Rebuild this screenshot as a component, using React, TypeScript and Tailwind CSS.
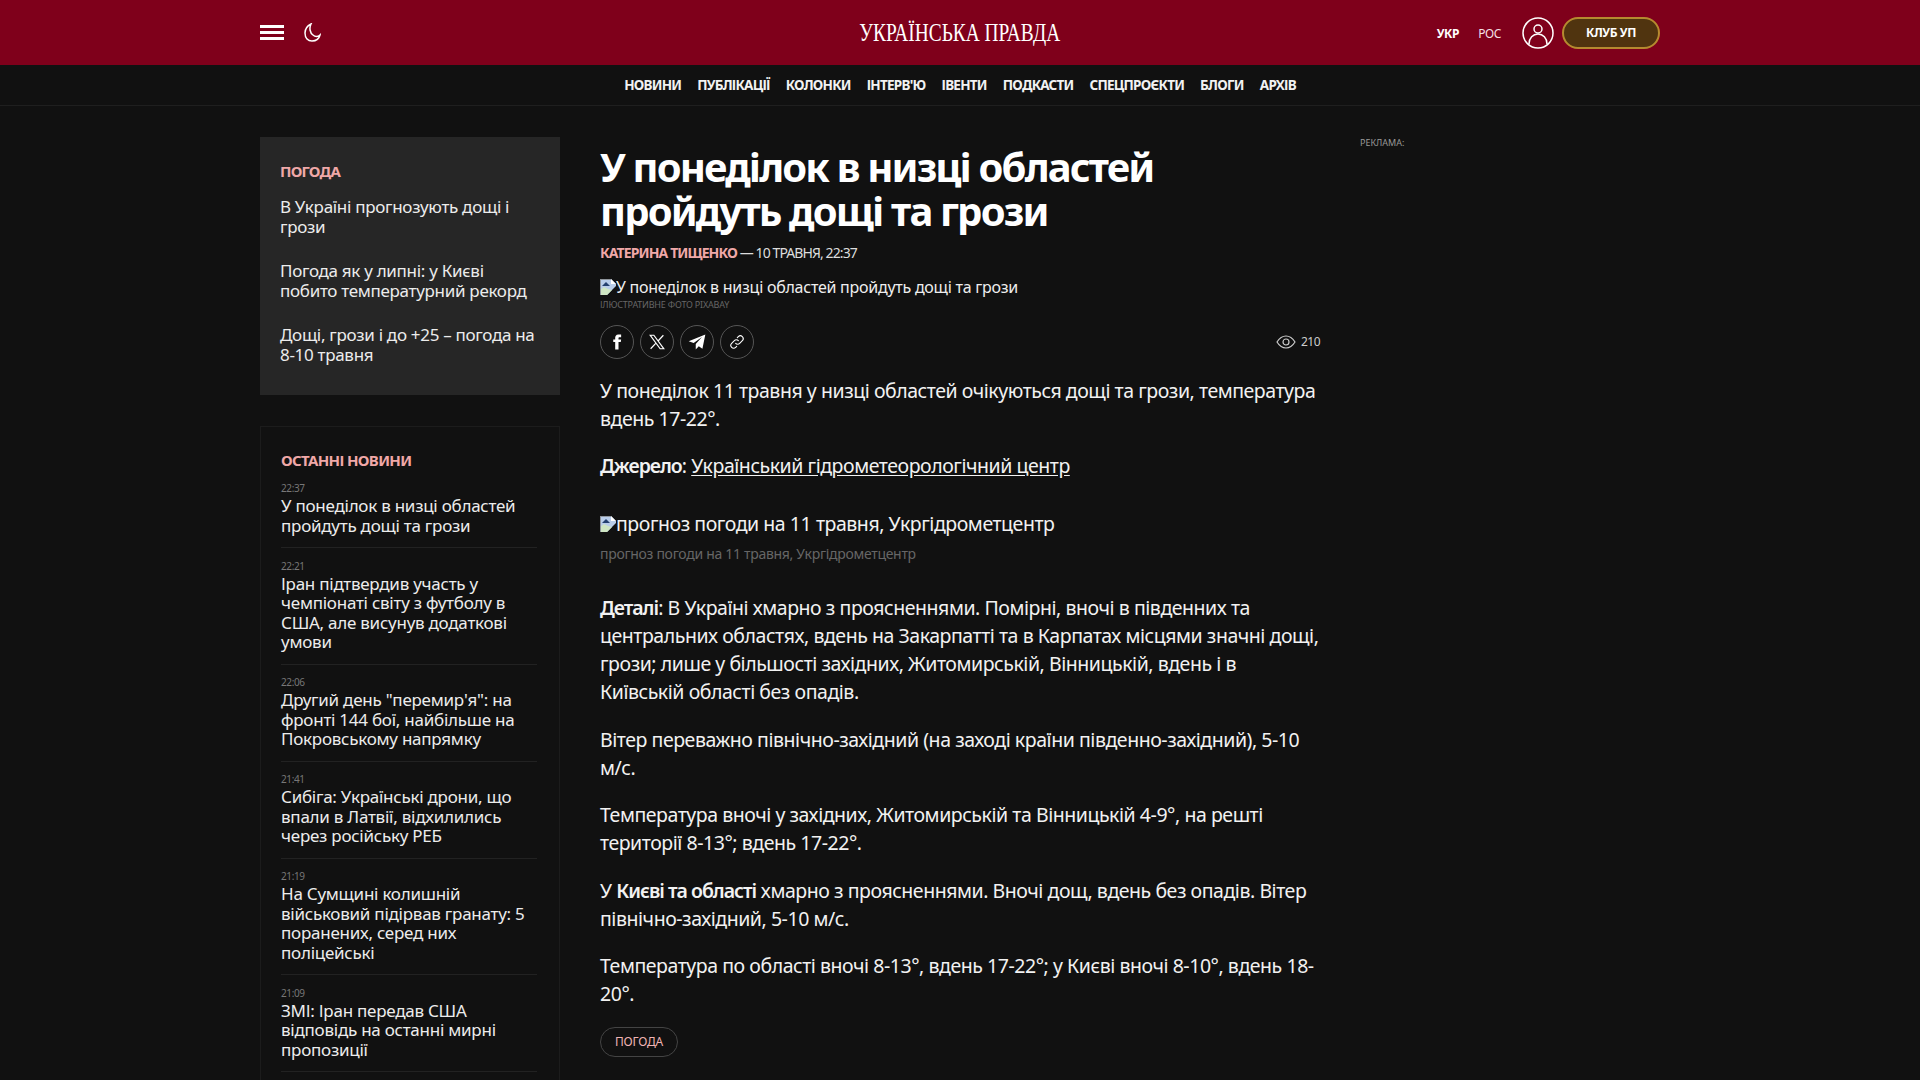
import React from 'react';

const sans = "font-['Noto_Sans','Open_Sans',sans-serif]";

const navItems = ['НОВИНИ', 'ПУБЛІКАЦІЇ', 'КОЛОНКИ', "ІНТЕРВ'Ю", 'ІВЕНТИ', 'ПОДКАСТИ', 'СПЕЦПРОЄКТИ', 'БЛОГИ', 'АРХІВ'];

const news = [
  { time: '22:37', title: 'У понеділок в низці областей пройдуть дощі та грози' },
  { time: '22:21', title: 'Іран підтвердив участь у чемпіонаті світу з футболу в США, але висунув додаткові умови' },
  { time: '22:06', title: 'Другий день "перемир\'я": на фронті 144 бої, найбільше на Покровському напрямку' },
  { time: '21:41', title: 'Сибіга: Українські дрони, що впали в Латвії, відхилились через російську РЕБ' },
  { time: '21:19', title: 'На Сумщині колишній військовий підірвав гранату: 5 поранених, серед них поліцейські' },
  { time: '21:09', title: 'ЗМІ: Іран передав США відповідь на останні мирні пропозиції' },
];

function BrokenImage() {
  return (
    <svg width="16" height="16" viewBox="0 0 16 16" className="shrink-0">
      <path d="M0 0H11L16 5V7L7 16H0Z" fill="#b9cdea" />
      <path d="M11 0V5H16Z" fill="#ffffff" />
      <path d="M0 11L4 8L8 10L12 11L7 16H0Z" fill="#cfe6c4" />
      <path d="M2 7L6 3L10 7Z" fill="#24406f" />
      <path d="M0 0H11V1H1V16H0Z" fill="#8f959c" />
    </svg>
  );
}

function ShareButton({ children }: { children: React.ReactNode }) {
  return (
    <div className="w-[34px] h-[34px] rounded-full border border-[#555] flex items-center justify-center text-white">
      {children}
    </div>
  );
}

export default function App() {
  return (
    <div className={`bg-[#111111] text-white overflow-hidden h-[1080px] ${sans}`}>
      {/* Header */}
      <header className="h-[65px] bg-[#7f001b]">
        <div className="relative w-[1400px] mx-auto h-full flex items-center">
          <div className="flex flex-col gap-[3px] w-[24px]">
            <span className="h-[3px] bg-white" />
            <span className="h-[3px] bg-white" />
            <span className="h-[3px] bg-white" />
          </div>
          <svg width="18" height="20" viewBox="0 0 18 20" fill="none" stroke="white" strokeWidth="1.5" className="ml-[19px]">
            <path d="M8 1C4 3 2 6 2 10c0 5 3 8 7 8 4 0 7-2 8-6-2 2-5 2-7 0C7 10 6 5 8 1Z" />
          </svg>
          <div className="absolute left-0 right-0 text-center pointer-events-none">
            <span className="inline-block font-['Liberation_Serif',serif] text-[26px] leading-[30px] scale-x-[0.745] whitespace-nowrap">
              УКРАЇНСЬКА ПРАВДА
            </span>
          </div>
          <div className="ml-auto flex items-center">
            <span className="text-[12px] font-bold tracking-[-0.4px] mt-[2px]">УКР</span>
            <span className="text-[12px] ml-[19px] tracking-[-0.4px] text-[#f3dfe3] mt-[2px]">РОС</span>
            <svg width="32" height="32" viewBox="0 0 32 32" fill="none" stroke="white" strokeWidth="1.5" className="ml-[21px]">
              <circle cx="16" cy="16" r="15" />
              <circle cx="16" cy="12" r="4" />
              <path d="M7 27c0-6 4-10 9-10s9 4 9 10" />
            </svg>
            <div className="ml-[8px] w-[98px] h-[32px] rounded-full bg-[#50340f] border-2 border-[#b58a2f] flex items-center justify-center text-[12px] font-bold tracking-[-0.4px]">
              КЛУБ УП
            </div>
          </div>
        </div>
      </header>

      {/* Sections nav */}
      <nav className="h-[41px] pt-[1px] border-b border-[#1f1f1f] flex items-center justify-center gap-[16px] text-[13.5px] font-bold tracking-[-0.75px] text-[#f2f2f2]">
        {navItems.map((item) => (
          <span key={item}>{item}</span>
        ))}
      </nav>

      <div className="w-[1400px] mx-auto flex pt-[31px]">
        {/* Left column */}
        <aside className="w-[300px] shrink-0">
          <section className="bg-[#262626] h-[258px] pt-[24px] px-[20px]">
            <h3 className="text-[15px] leading-[20px] font-bold text-[#f0a8a8] tracking-[-0.8px]">ПОГОДА</h3>
            <div className="mt-[6px] flex flex-col gap-[24px] text-[17px] leading-[20px] tracking-[-0.3px] text-[#ececec]">
              <p className="mt-[10px]">В Україні прогнозують дощі і грози</p>
              <p>Погода як у липні: у Києві побито температурний рекорд</p>
              <p>Дощі, грози і до +25 – погода на 8-10 травня</p>
            </div>
          </section>
          <section className="mt-[31px] border border-[#1c1c1c] pl-[20px] pr-[22px] pt-[23px]">
            <h3 className="text-[15px] leading-[20px] font-bold text-[#f0a8a8] tracking-[-0.65px]">ОСТАННІ НОВИНИ</h3>
            <div className="mt-[11px]">
              {news.map((n) => (
                <div key={n.time} className="border-b border-[#222] pb-[12px] mb-[10.5px]">
                  <div className="text-[10px] leading-[14px] text-[#777] tracking-[-0.4px]">{n.time}</div>
                  <div className="mt-[1px] text-[17px] leading-[19.5px] tracking-[-0.25px] text-[#ececec]">{n.title}</div>
                </div>
              ))}
            </div>
          </section>
        </aside>

        {/* Article */}
        <main className="ml-[40px] w-[720px] shrink-0">
          <h1 className="pt-[8px] text-[40px] leading-[44px] font-bold tracking-[-1.85px] pr-[100px]">
            У понеділок в низці областей пройдуть дощі та грози
          </h1>
          <div className="mt-[10px] text-[14px] leading-[20px] tracking-[-0.9px] text-[#dddddd]">
            <span className="font-bold text-[#f0a8a8]">КАТЕРИНА ТИЩЕНКО</span> — 10 ТРАВНЯ, 22:37
          </div>
          <div className="mt-[13px] flex items-center text-[16px] leading-[22px] tracking-[-0.25px] text-[#eeeeee]">
            <BrokenImage />
            <span>У понеділок в низці областей пройдуть дощі та грози</span>
          </div>
          <div className="text-[9px] leading-[12px] mt-[1px] text-[#666] tracking-[-0.2px]">ІЛЮСТРАТИВНЕ ФОТО PIXABAY</div>
          <div className="mt-[14px] flex items-center gap-[6px]">
            <ShareButton>
              <svg width="18" height="18" viewBox="0 0 24 24" fill="white"><path d="M14 8.5V6.6c0-.9.6-1.1 1-1.1h2.5V2H14c-3.6 0-4.4 2.6-4.4 4.4v2.1H7V12h2.6v10H14V12h3l.5-3.5H14Z" /></svg>
            </ShareButton>
            <ShareButton>
              <svg width="18" height="18" viewBox="0 0 24 24" fill="none" stroke="white" strokeWidth="1.6"><path d="M3 3h4.8L21 21h-4.8ZM20.5 3l-7.4 8M10.6 13.600 3.500 21" /></svg>
            </ShareButton>
            <ShareButton>
              <svg width="20" height="20" viewBox="0 0 24 24" fill="white"><path d="M22 3 2 11l6 2.2L18 6l-7.5 8.5V21l3.6-4 4.4 3.2Z" /></svg>
            </ShareButton>
            <ShareButton>
              <svg width="16" height="16" viewBox="0 0 24 24" fill="none" stroke="white" strokeWidth="1.6" strokeLinecap="round"><path d="M10 14a4 4 0 0 0 6 0l4-4a4 4 0 0 0-6-6l-1.500 1.500" /><path d="M14 10a4 4 0 0 0-6 0l-4 4a4 4 0 0 0 6 6l1.500-1.500" /></svg>
            </ShareButton>
            <div className="ml-auto flex items-center gap-[5px] text-[12px] tracking-[-0.5px] text-[#cccccc]">
              <svg width="20" height="16" viewBox="0 0 20 16" fill="none" stroke="#cccccc" strokeWidth="1.2"><path d="M1 8c2.500-4 5.500-6 9-6s6.500 2 9 6c-2.500 4-5.500 6-9 6s-6.500-2-9-6Z" /><circle cx="10" cy="8" r="3" /></svg>
              210
            </div>
          </div>

          <div className="mt-[18px] text-[19.5px] leading-[28px] tracking-[-0.45px] text-[#f2f2f2]">
            <p>У понеділок 11 травня у низці областей очікуються дощі та грози, температура вдень 17-22°.</p>
            <p className="mt-[19px]">
              <b className="font-semibold tracking-[-1px]">Джерело</b>: <a className="underline underline-offset-2">Український гідрометеорологічний центр</a>
            </p>
            <div className="mt-[30px] flex items-center">
              <BrokenImage />
              <span>прогноз погоди на 11 травня, Укргідрометцентр</span>
            </div>
            <div className="mt-[6px] text-[14px] leading-[20px] tracking-[-0.3px] text-[#666]">прогноз погоди на 11 травня, Укргідрометцентр</div>
            <p className="mt-[30px]">
              <b className="font-semibold tracking-[-1px]">Деталі</b>: В Україні хмарно з проясненнями. Помірні, вночі в південних та центральних областях, вдень на Закарпатті та в Карпатах місцями значні дощі, грози; лише у більшості західних, Житомирській, Вінницькій, вдень і в Київській області без опадів.
            </p>
            <p className="mt-[19.500px]">Вітер переважно північно-західний (на заході країни південно-західний), 5-10 м/с.</p>
            <p className="mt-[19.500px]">Температура вночі у західних, Житомирській та Вінницькій 4-9°, на решті території 8-13°; вдень 17-22°.</p>
            <p className="mt-[19.500px]">У <b className="font-semibold tracking-[-1px]">Києві та області</b> хмарно з проясненнями. Вночі дощ, вдень без опадів. Вітер північно-західний, 5-10 м/с.</p>
            <p className="mt-[19.500px]">Температура по області вночі 8-13°, вдень 17-22°; у Києві вночі 8-10°, вдень 18-20°.</p>
          </div>
          <div className="mt-[19px] inline-flex items-center justify-center w-[78px] h-[30px] rounded-full border border-[#444] text-[12px] tracking-[-0.2px] text-[#f0b4b4]">
            ПОГОДА
          </div>
        </main>

        {/* Ad column */}
        <aside className="ml-[40px] text-[9px] leading-[12px] text-[#999]">РЕКЛАМА:</aside>
      </div>
    </div>
  );
}
